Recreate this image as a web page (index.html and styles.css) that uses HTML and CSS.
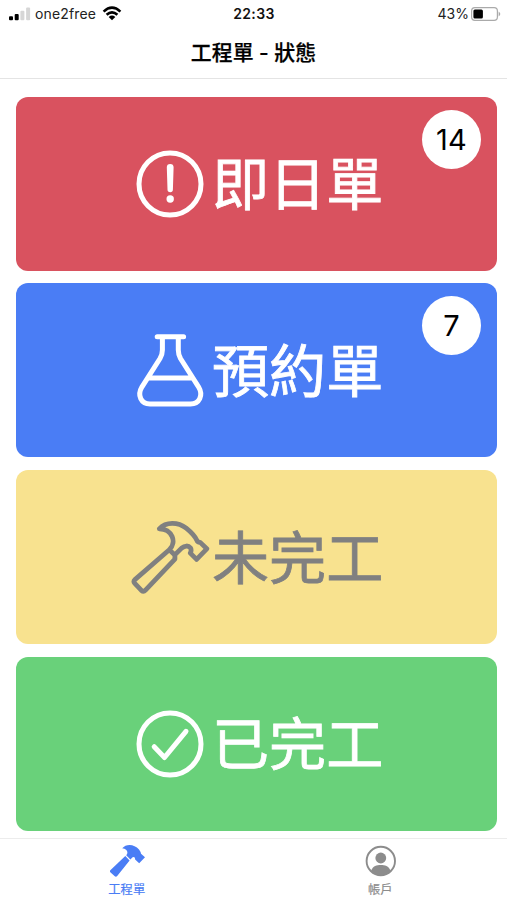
FILE: index.html
```html
<!DOCTYPE html>
<html lang="zh-Hant">
<head>
<meta charset="utf-8">
<title>工程單 - 狀態</title>
<link rel="stylesheet" href="styles.css">
</head>
<body>
<div class="app">
  <div class="status">
    <div class="carrier">
      <svg class="signal" width="22" height="14" viewBox="0 0 22 14"><rect x="0" y="9.2" width="4" height="4" rx="1"/><rect x="5.7" y="7" width="4" height="6.2" rx="1"/><rect class="off" x="11.4" y="3.7" width="4" height="9.5" rx="1"/><rect class="off" x="17.1" y="0.6" width="4" height="12.6" rx="1"/></svg>
      <span class="operator">one2free</span>
      <svg class="wifi" width="20" height="15" viewBox="0 0 20 15"><path d="M1.6 5.6Q10-2.2 18.4 5.6M4.6 8.8Q10 3.8 15.4 8.8"/><path class="dot" d="M6.7 10.9Q10 8.2 13.3 10.9L10 14.3Z"/></svg>
    </div>
    <div class="time">22:33</div>
    <div class="power">
      <span>43%</span>
      <svg width="30" height="14" viewBox="0 0 30 14"><rect class="shell" x=".6" y=".6" width="25.8" height="12.8" rx="3.3"/><rect x="2.4" y="2.4" width="9.5" height="9.2" rx="1.5"/><path class="cap" d="M27.6 4.4Q31 7 27.6 9.6Z"/></svg>
    </div>
  </div>
  <header class="header"><h1>工程單 - 狀態</h1></header>
  <main class="cards">
    <section class="card red">
      <svg class="icon" viewBox="0 0 80 80"><circle cx="40" cy="40" r="31"/><path class="solid" d="M36.8 23.3a3.4 3.4 0 0 1 6.8 0L42.9 45.5a2.7 2.7 0 0 1-5.4 0Z"/><circle class="solid" cx="40.2" cy="55" r="3.7"/></svg>
      <span class="label">即日單</span>
      <span class="badge">14</span>
    </section>
    <section class="card blue">
      <svg class="icon" viewBox="0 0 80 80"><path d="M27.2 6.7H53.6M32.4 6.7V20Q32.4 24.5 30 28.5L12 56.8C6.8 65.5 11.2 74 20 74H60.5C69.3 74 73.7 65.5 68.5 56.8L50.5 28.5Q48.3 24.5 48.3 20V6.7M20 48H61"/></svg>
      <span class="label">預約單</span>
      <span class="badge">7</span>
    </section>
    <section class="card yellow">
      <svg class="icon hammer" viewBox="0 0 80 80"><path d="M29.3 11.8C36 4.5 48 4.7 56.2 11.2C61.5 15.5 64.5 18.5 66.8 23.2Q67.7 25.6 70.2 25.4L76.8 31.8L66.6 42.4L60.3 36.1Q61.9 33 60.3 30.7C58.4 28.3 54.7 28.5 51.6 31.1L44.8 37.9L39.3 32.8C47.2 25.4 42.2 11.8 29.3 11.8ZM39.3 32.8L5.2 62.4Q3 64.4 4.8 66.4L11.4 73.4Q13.5 75.3 15.5 73.2L44.9 42.1V38"/></svg>
      <span class="label">未完工</span>
    </section>
    <section class="card green">
      <svg class="icon" viewBox="0 0 80 80"><circle cx="40" cy="40" r="31"/><path d="M24.2 42.7L34.5 53.5L56 27.3"/></svg>
      <span class="label">已完工</span>
    </section>
  </main>
  <nav class="tabs">
    <a class="tab active">
      <svg width="36" height="34" viewBox="0 0 36 34"><path d="M13.2 4.3C17-.5 25.3-.2 30 5.6Q31.8 7.9 32 9.8L36 13.2L30.2 19.2L26.1 15.5Q26.3 12.4 23.6 13.2L21.4 15.4L17.2 11.3C19.8 8.6 18.1 4.6 13.2 4.3ZM16.3 12.1L20.6 16.4L8.2 31.9Q7 33.3 5.5 32L1.6 28.5Q.3 27.2 1.6 26Z"/></svg>
      <span>工程單</span>
    </a>
    <a class="tab">
      <svg width="32" height="34" viewBox="0 0 32 34"><circle class="ring" cx="16.8" cy="17" r="14.2"/><circle cx="16.8" cy="14" r="5.4"/><path d="M7.1 26.8C8.8 22 12.8 21 16.8 21S24.8 22 26.5 26.8Q22.8 31.2 16.8 31.2T7.1 26.8Z"/></svg>
      <span>帳戶</span>
    </a>
  </nav>
</div>
</body>
</html>
```
FILE: styles.css
```css
* { box-sizing: border-box; }
body { margin: 0; background: #fff; color: #000; font-family: Inter, "Noto Sans CJK TC", sans-serif; }
svg { display: block; flex: none; }
.app { height: 900px; display: flex; flex-direction: column; overflow: hidden; }
.status { height: 26px; display: grid; grid-template-columns: 1fr auto 1fr; align-items: center; padding: 1px 6px 0 9px; font-size: 14px; line-height: 20px; color: #222; }
.carrier { display: flex; align-items: center; }
.signal .off { fill: #d6d6d6; }
.operator { margin-left: 4px; width: 62px; white-space: nowrap; letter-spacing: .15px; }
.wifi { margin-left: 5px; fill: none; stroke: #000; stroke-width: 2.6; }
.wifi .dot { fill: #000; stroke: none; }
.time { font-weight: 600; color: #111; letter-spacing: .4px; margin-left: -2px; }
.power { display: flex; justify-content: flex-end; align-items: center; gap: 2px; }
.shell { fill: none; stroke: #aaa; stroke-width: 1.2; }
.cap { fill: #aaa; }
.header { height: 53px; border-bottom: 1px solid #e4e4e4; display: flex; justify-content: center; align-items: center; }
.header h1 { margin: 1px 0 0; font-size: 20.9px; line-height: 28px; font-weight: 500; -webkit-text-stroke: .25px #000; }
.cards { padding: 17.5px 10px 0 15.5px; height: 759px; display: flex; flex-direction: column; gap: 12.8px; }
.card { height: 174px; border-radius: 12px; color: #fff; position: relative; display: flex; align-items: center; padding-left: 114.5px; }
.red { background: #d9525f; }
.blue { background: #4a7df5; }
.yellow { background: #f8e28f; color: #808080; }
.green { background: #69d17a; }
.icon { width: 80px; height: 80px; fill: none; stroke: currentColor; stroke-width: 5; stroke-linecap: round; stroke-linejoin: round; }
.icon .solid { fill: currentColor; stroke: none; }
.hammer { stroke-width: 4.8; }
.label { margin: 0 0 7px 2px; font-family: "Noto Sans CJK TC", sans-serif; font-size: 57.1px; line-height: 70px; white-space: nowrap; -webkit-text-stroke: .8px currentColor; }
.badge { position: absolute; top: 13px; right: 16px; width: 59px; height: 59px; border-radius: 50%; background: #fff; color: #000; display: flex; align-items: center; justify-content: center; font-size: 29px; letter-spacing: .3px; }
.tabs { flex: 1; border-top: 1px solid #ececec; display: flex; }
.tab { flex: 1; display: flex; flex-direction: column; align-items: center; padding-top: 5px; color: #8c8c8c; fill: currentColor; font-size: 12.3px; line-height: 18px; gap: 3px; }
.active { color: #4a7df5; }
.tab span { -webkit-text-stroke: .2px currentColor; }
.ring { fill: none; stroke: currentColor; stroke-width: 1.9; }
```
